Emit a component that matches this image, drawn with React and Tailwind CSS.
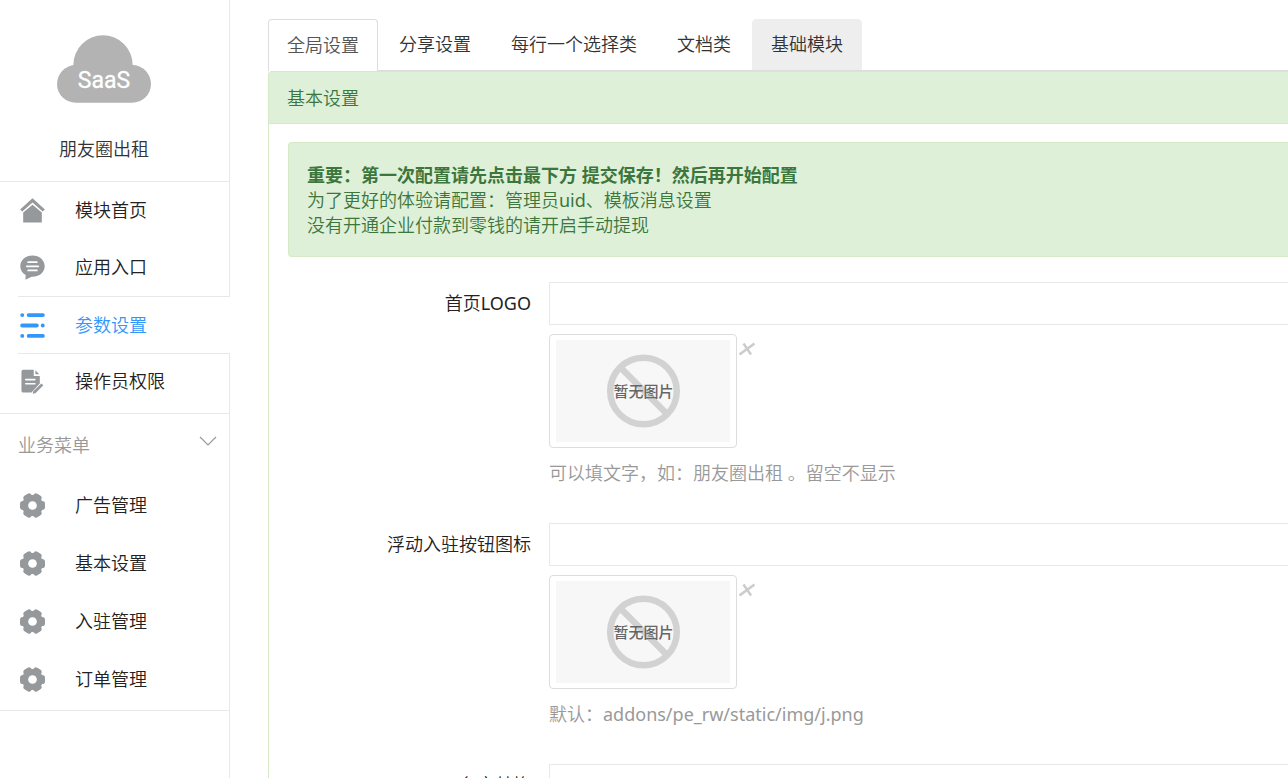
const HomeIcon = () => (
  <svg viewBox="0 0 26 26" className="size-[25px] shrink-0 fill-current" aria-hidden="true">
    <path d="M13 .3 25.900 12 23.600 14 13 4.600 2.400 14 .100 12Z" />
    <path d="M13 7 22.700 15.200V25.500H3.300V15.200Z" />
  </svg>
);

const ChatIcon = () => (
  <svg viewBox="0 0 26 26" className="size-[25px] shrink-0" aria-hidden="true">
    <path fill="currentColor" d="M13 .5C5.800.5.300 5.300.300 11.700c0 4 2.200 7.300 5.600 9.200L5.700 25.800l6.300-3.300c8 .5 13.700-4.500 13.700-10.800C25.700 5.300 20.200.5 13 .5Z" />
    <path stroke="#fff" strokeWidth="1.800" strokeLinecap="round" d="M8.500 7.500h9M7 11.800h12M8.500 16h9" />
  </svg>
);

const ParamsIcon = () => (
  <svg viewBox="0 0 26 26" className="size-[25px] shrink-0" aria-hidden="true">
    <path fill="none" stroke="currentColor" strokeWidth="4" strokeLinecap="round" d="M9 2.200h14.800M2.200 13h15.300M9 23.800h14.800M2.300 2.200h.1M23.600 13h.1M2.300 23.800h.1" />
  </svg>
);

const DocIcon = () => (
  <svg viewBox="0 0 26 26" className="size-[25px] shrink-0" aria-hidden="true">
    <path fill="currentColor" d="M3.500.8h10.800v6.400h6.300V15L12 24.500H3.500a2 2 0 0 1-2-2V2.800a2 2 0 0 1 2-2Z" />
    <path fill="currentColor" d="M16 1.200 20 5.500h-4ZM22.300 15l2 1.900-8.300 8.400-2.800.5.600-2.600Z" />
    <path stroke="#fff" strokeWidth="1.700" strokeLinecap="round" d="M6 11h9.500M6 15.300h9.500" />
  </svg>
);

const GearIcon = () => (
  <svg viewBox="0 0 26 26" className="size-[25px] shrink-0" aria-hidden="true">
    <g fill="currentColor">
      <circle cx="13" cy="13" r="11" />
      <rect x="8.300" y="0" width="9.400" height="26" rx="3" transform="rotate(30 13 13)" />
      <rect x="8.300" y="0" width="9.400" height="26" rx="3" transform="rotate(90 13 13)" />
      <rect x="8.300" y="0" width="9.400" height="26" rx="3" transform="rotate(150 13 13)" />
    </g>
    <circle cx="13" cy="13" r="4.500" fill="#fff" />
  </svg>
);

const mainMenu = [
  { label: "模块首页", Icon: HomeIcon },
  { label: "应用入口", Icon: ChatIcon },
  { label: "参数设置", Icon: ParamsIcon, active: true },
  { label: "操作员权限", Icon: DocIcon },
];

const businessMenu = ["广告管理", "基本设置", "入驻管理", "订单管理"];

const tabs = ["全局设置", "分享设置", "每行一个选择类", "文档类", "基础模块"];

const fields = [
  { id: "logo", label: "首页LOGO", picture: true, help: "可以填文字，如：朋友圈出租 。留空不显示" },
  { id: "float", label: "浮动入驻按钮图标", picture: true, help: "默认：addons/pe_rw/static/img/j.png" },
  { id: "rename", label: "名字替换" },
];

/* Latin runs are set one weight heavier than the thin Chinese text around them. */
function Mixed({ text }) {
  return text.split(/([A-Za-z/_.]+)/).map((part, i) =>
    i % 2 ? (
      <span key={i} className="font-normal">
        {part}
      </span>
    ) : (
      part
    ),
  );
}

function Sidebar() {
  return (
    <aside className="flex w-[230px] shrink-0 flex-col">
      <div className="flex h-[182px] flex-col items-center border-r border-b border-[#e7e8eb] pt-[35px] pr-[21px]">
        <svg viewBox="0 0 94 68" className="h-[68px] w-[94px]" role="img" aria-label="SaaS">
          <g fill="#b3b3b3">
            <circle cx="46" cy="30" r="29.700" />
            <rect x="0" y="30" width="94" height="37.800" rx="18.900" />
          </g>
          <text x="47" y="53" textAnchor="middle" fill="#fff" stroke="#fff" strokeWidth=".3" fontSize="23" fontFamily="Roboto, sans-serif" fontWeight="400">SaaS</text>
        </svg>
        <div className="mt-[34px] text-[#333]">朋友圈出租</div>
      </div>
      <nav className="border-b border-[#e7e8eb]">
        {mainMenu.map(({ label, Icon, active }) => (
          <div key={label} className={active ? "pl-[18px]" : "border-r border-[#e7e8eb] last:pb-[5px]"}>
            <a
              href="#"
              className={
                active
                  ? "flex h-[58px] items-center gap-[30px] border-y border-[#e7e8eb] pl-[2px] text-[#3296fa]"
                  : Icon === DocIcon
                    ? "flex h-[54px] items-center gap-[30px] pl-5"
                    : "flex h-[57px] items-center gap-[30px] pl-5"
              }
            >
              <span className={active ? "text-[#3296fa]" : "text-[#96999c]"}>
                <Icon />
              </span>
              {label}
            </a>
          </div>
        ))}
      </nav>
      <nav className="border-r border-b border-[#e7e8eb] pb-[2px]">
        <button type="button" className="flex h-[62px] w-full items-center justify-between pr-3 pl-[18px] text-[#999]">
          业务菜单
          <svg viewBox="0 0 18 10" className="mb-2 h-[10px] w-[18px]" aria-hidden="true">
            <path fill="none" stroke="currentColor" strokeWidth="1.200" d="m1 1 8 8 8-8" />
          </svg>
        </button>
        {businessMenu.map((label) => (
          <a key={label} href="#" className="flex h-[58px] items-center gap-[30px] pl-5">
            <span className="text-[#96999c]">
              <GearIcon />
            </span>
            {label}
          </a>
        ))}
      </nav>
      <div className="grow border-r border-[#e7e8eb]" />
    </aside>
  );
}

function Thumbnail() {
  return (
    <div className="mt-[9px] flex items-start gap-[2px]">
      <div className="rounded border border-[#ddd] px-[6px] py-[5px]">
        <svg viewBox="0 0 174 102" className="h-[102px] w-[174px] bg-[#f7f7f7]" role="img" aria-label="暂无图片">
          <g fill="none" stroke="#d2d2d2" strokeWidth="6.500">
            <circle cx="87.500" cy="51" r="33.300" />
            <path d="m64 27 47 47" />
          </g>
          <text x="87.500" y="57" textAnchor="middle" fill="#666" fontSize="15" fontWeight="500" fontFamily="Noto Sans CJK SC, sans-serif">暂无图片</text>
        </svg>
      </div>
      <button type="button" aria-label="删除" className="mt-2 text-[#ccc]">
        <svg viewBox="0 0 16 14" className="h-[14px] w-4" aria-hidden="true">
          <path fill="none" stroke="currentColor" strokeWidth="2.500" d="M4.500 1.500 12 12.500M15.500 1.500.500 12.500" />
        </svg>
      </button>
    </div>
  );
}

function Field({ id, label, picture, help }) {
  return (
    <div className="flex min-h-[241px] gap-[18px]">
      <label htmlFor={id} className="w-[243px] shrink-0 pt-[9px] text-right">
        <Mixed text={label} />
      </label>
      <div className="grow">
        <input id={id} type="text" className="block h-[43px] w-full border border-r-0 border-[#e7e8eb] px-3 outline-none" />
        {picture && <Thumbnail />}
        {help && (
          <p className="mt-[13px] text-[#999]">
            <Mixed text={help} />
          </p>
        )}
      </div>
    </div>
  );
}

export default function App() {
  return (
    <div className="flex h-screen overflow-hidden bg-white font-['Noto_Sans','Noto_Sans_CJK_SC',sans-serif] text-[18px] leading-[25px] font-[350] text-[#222]">
      <Sidebar />
      <main className="min-w-0 grow pt-[19px] pl-[38px]">
        <div role="tablist" className="flex gap-[2px] border-b border-[#ddd]">
          {tabs.map((tab, i) => (
            <button
              key={tab}
              type="button"
              role="tab"
              aria-selected={i === 0}
              className={
                i === 0
                  ? "-mb-px h-[52px] rounded-t border border-b-0 border-[#ddd] bg-white px-[18px] text-[#555]"
                  : i === 4
                    ? "h-[51px] rounded-t border border-[#eee] bg-[#eee] px-[18px] text-[#333]"
                    : "h-[51px] rounded-t border border-transparent px-[18px] text-[#333]"
              }
            >
              {tab}
            </button>
          ))}
        </div>
        <section className="rounded-tl border border-r-0 border-[#d6e9c6]">
          <h2 className="border-b border-[#d6e9c6] bg-[#dff0d8] px-[18px] pt-[14px] pb-3 font-[350] text-[#3c763d]">基本设置</h2>
          <div className="pt-[18px] pl-[19px]">
            <div className="mb-[25px] rounded-l border border-r-0 border-[#d6e9c6] bg-[#dff0d8] px-[18px] pt-5 pb-[18px] text-[#3c763d]">
              <p className="font-bold">重要：第一次配置请先点击最下方 提交保存！然后再开始配置</p>
              <p>
                <Mixed text="为了更好的体验请配置：管理员uid、模板消息设置" />
              </p>
              <p>没有开通企业付款到零钱的请开启手动提现</p>
            </div>
            {fields.map((field) => (
              <Field key={field.id} {...field} />
            ))}
          </div>
        </section>
      </main>
    </div>
  );
}
